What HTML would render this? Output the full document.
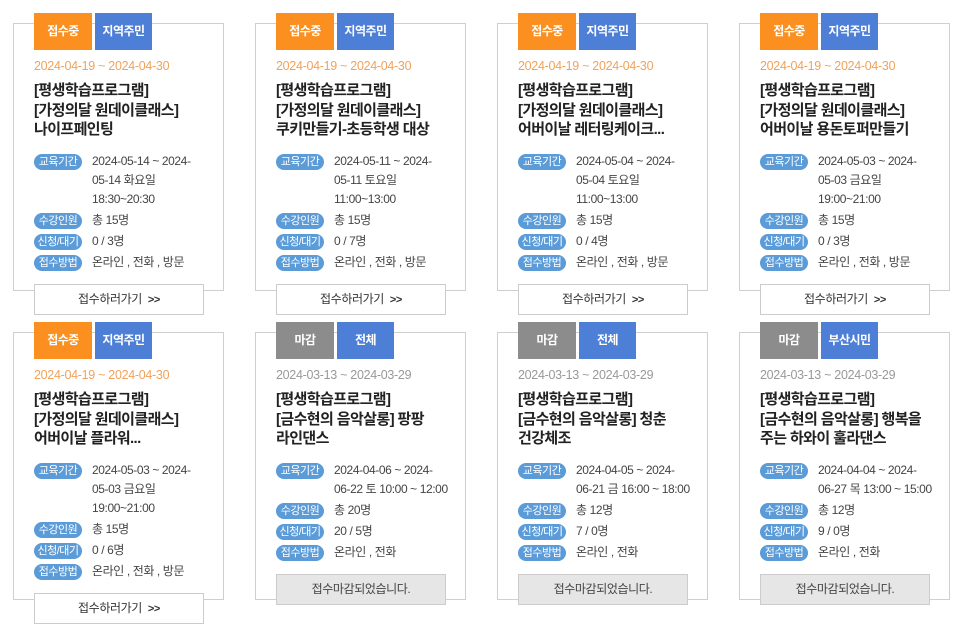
<!DOCTYPE html>
<html><head><meta charset="utf-8"><style>
*{margin:0;padding:0;box-sizing:border-box}
body{width:966px;height:638px;background:#fff;font-family:"Liberation Sans","Noto Sans CJK KR",sans-serif;position:relative;overflow:hidden;color:#333}
.c{position:absolute;width:211px;height:279px}
.bd{position:absolute;left:0;top:10px;width:211px;height:268px;border:1px solid #cfcfcf}
.b1,.b2{position:absolute;top:0;height:37px;color:#fff;font-size:12px;font-weight:bold;text-align:center;line-height:37px;letter-spacing:-0.5px}
.b1{left:21px;width:58px;background:#fb8f20}
.b1.g{background:#8c8c8c}
.b2{left:82px;width:57px;background:#4e7fd6}
.dt{position:absolute;left:21px;top:46px;font-size:12.5px;color:#f1a25a;letter-spacing:-0.3px}
.dt.g{color:#999}
.tt{position:absolute;left:21px;top:68px;width:180px;font-size:15px;font-weight:bold;line-height:19.5px;color:#222;letter-spacing:-0.6px}
.in{position:absolute;left:21px;top:139px;width:185px}
.r{display:flex;margin-bottom:2px}
.p{flex:none;width:48px;height:16px;margin-top:1.5px;border-radius:8px;background:#5b9bd8;color:#fff;font-size:11px;line-height:16px;text-align:center;letter-spacing:-0.5px}
.v{margin-left:10px;font-size:12px;line-height:19px;color:#444;letter-spacing:-0.4px}
.bt{position:absolute;left:21px;top:271px;width:170px;height:31px;border:1px solid #ccc;background:#fff;text-align:center;font-size:12px;line-height:29px;color:#333;letter-spacing:-0.4px}
.bt b{margin-left:6px;font-size:11px}
.bt.x{background:#e6e6e6;color:#444}
</style></head><body>

<div class="c" style="left:13px;top:13px"><div class="bd"></div><div class="b1">접수중</div><div class="b2">지역주민</div>
<div class="dt">2024-04-19 ~ 2024-04-30</div>
<div class="tt">[평생학습프로그램]<br>[가정의달 원데이클래스]<br>나이프페인팅</div>
<div class="in"><div class="r"><span class="p">교육기간</span><span class="v">2024-05-14 ~ 2024-<br>05-14 화요일<br>18:30~20:30</span></div>
<div class="r"><span class="p">수강인원</span><span class="v">총 15명</span></div>
<div class="r"><span class="p">신청/대기</span><span class="v">0 / 3명</span></div>
<div class="r"><span class="p">접수방법</span><span class="v">온라인 , 전화 , 방문</span></div></div>
<div class="bt">접수하러가기<b>&gt;&gt;</b></div></div>

<div class="c" style="left:255px;top:13px"><div class="bd"></div><div class="b1">접수중</div><div class="b2">지역주민</div>
<div class="dt">2024-04-19 ~ 2024-04-30</div>
<div class="tt">[평생학습프로그램]<br>[가정의달 원데이클래스]<br>쿠키만들기-초등학생 대상</div>
<div class="in"><div class="r"><span class="p">교육기간</span><span class="v">2024-05-11 ~ 2024-<br>05-11 토요일<br>11:00~13:00</span></div>
<div class="r"><span class="p">수강인원</span><span class="v">총 15명</span></div>
<div class="r"><span class="p">신청/대기</span><span class="v">0 / 7명</span></div>
<div class="r"><span class="p">접수방법</span><span class="v">온라인 , 전화 , 방문</span></div></div>
<div class="bt">접수하러가기<b>&gt;&gt;</b></div></div>

<div class="c" style="left:497px;top:13px"><div class="bd"></div><div class="b1">접수중</div><div class="b2">지역주민</div>
<div class="dt">2024-04-19 ~ 2024-04-30</div>
<div class="tt">[평생학습프로그램]<br>[가정의달 원데이클래스]<br>어버이날 레터링케이크...</div>
<div class="in"><div class="r"><span class="p">교육기간</span><span class="v">2024-05-04 ~ 2024-<br>05-04 토요일<br>11:00~13:00</span></div>
<div class="r"><span class="p">수강인원</span><span class="v">총 15명</span></div>
<div class="r"><span class="p">신청/대기</span><span class="v">0 / 4명</span></div>
<div class="r"><span class="p">접수방법</span><span class="v">온라인 , 전화 , 방문</span></div></div>
<div class="bt">접수하러가기<b>&gt;&gt;</b></div></div>

<div class="c" style="left:739px;top:13px"><div class="bd"></div><div class="b1">접수중</div><div class="b2">지역주민</div>
<div class="dt">2024-04-19 ~ 2024-04-30</div>
<div class="tt">[평생학습프로그램]<br>[가정의달 원데이클래스]<br>어버이날 용돈토퍼만들기</div>
<div class="in"><div class="r"><span class="p">교육기간</span><span class="v">2024-05-03 ~ 2024-<br>05-03 금요일<br>19:00~21:00</span></div>
<div class="r"><span class="p">수강인원</span><span class="v">총 15명</span></div>
<div class="r"><span class="p">신청/대기</span><span class="v">0 / 3명</span></div>
<div class="r"><span class="p">접수방법</span><span class="v">온라인 , 전화 , 방문</span></div></div>
<div class="bt">접수하러가기<b>&gt;&gt;</b></div></div>

<div class="c" style="left:13px;top:322px"><div class="bd"></div><div class="b1">접수중</div><div class="b2">지역주민</div>
<div class="dt">2024-04-19 ~ 2024-04-30</div>
<div class="tt">[평생학습프로그램]<br>[가정의달 원데이클래스]<br>어버이날 플라워...</div>
<div class="in"><div class="r"><span class="p">교육기간</span><span class="v">2024-05-03 ~ 2024-<br>05-03 금요일<br>19:00~21:00</span></div>
<div class="r"><span class="p">수강인원</span><span class="v">총 15명</span></div>
<div class="r"><span class="p">신청/대기</span><span class="v">0 / 6명</span></div>
<div class="r"><span class="p">접수방법</span><span class="v">온라인 , 전화 , 방문</span></div></div>
<div class="bt">접수하러가기<b>&gt;&gt;</b></div></div>

<div class="c" style="left:255px;top:322px"><div class="bd"></div><div class="b1 g">마감</div><div class="b2">전체</div>
<div class="dt g">2024-03-13 ~ 2024-03-29</div>
<div class="tt">[평생학습프로그램]<br>[금수현의 음악살롱] 팡팡<br>라인댄스</div>
<div class="in"><div class="r"><span class="p">교육기간</span><span class="v">2024-04-06 ~ 2024-<br>06-22 토 10:00 ~ 12:00</span></div>
<div class="r"><span class="p">수강인원</span><span class="v">총 20명</span></div>
<div class="r"><span class="p">신청/대기</span><span class="v">20 / 5명</span></div>
<div class="r"><span class="p">접수방법</span><span class="v">온라인 , 전화</span></div></div>
<div class="bt x" style="top:252px">접수마감되었습니다.</div></div>

<div class="c" style="left:497px;top:322px"><div class="bd"></div><div class="b1 g">마감</div><div class="b2">전체</div>
<div class="dt g">2024-03-13 ~ 2024-03-29</div>
<div class="tt">[평생학습프로그램]<br>[금수현의 음악살롱] 청춘<br>건강체조</div>
<div class="in"><div class="r"><span class="p">교육기간</span><span class="v">2024-04-05 ~ 2024-<br>06-21 금 16:00 ~ 18:00</span></div>
<div class="r"><span class="p">수강인원</span><span class="v">총 12명</span></div>
<div class="r"><span class="p">신청/대기</span><span class="v">7 / 0명</span></div>
<div class="r"><span class="p">접수방법</span><span class="v">온라인 , 전화</span></div></div>
<div class="bt x" style="top:252px">접수마감되었습니다.</div></div>

<div class="c" style="left:739px;top:322px"><div class="bd"></div><div class="b1 g">마감</div><div class="b2">부산시민</div>
<div class="dt g">2024-03-13 ~ 2024-03-29</div>
<div class="tt">[평생학습프로그램]<br>[금수현의 음악살롱] 행복을<br>주는 하와이 훌라댄스</div>
<div class="in"><div class="r"><span class="p">교육기간</span><span class="v">2024-04-04 ~ 2024-<br>06-27 목 13:00 ~ 15:00</span></div>
<div class="r"><span class="p">수강인원</span><span class="v">총 12명</span></div>
<div class="r"><span class="p">신청/대기</span><span class="v">9 / 0명</span></div>
<div class="r"><span class="p">접수방법</span><span class="v">온라인 , 전화</span></div></div>
<div class="bt x" style="top:252px">접수마감되었습니다.</div></div>

</body></html>
